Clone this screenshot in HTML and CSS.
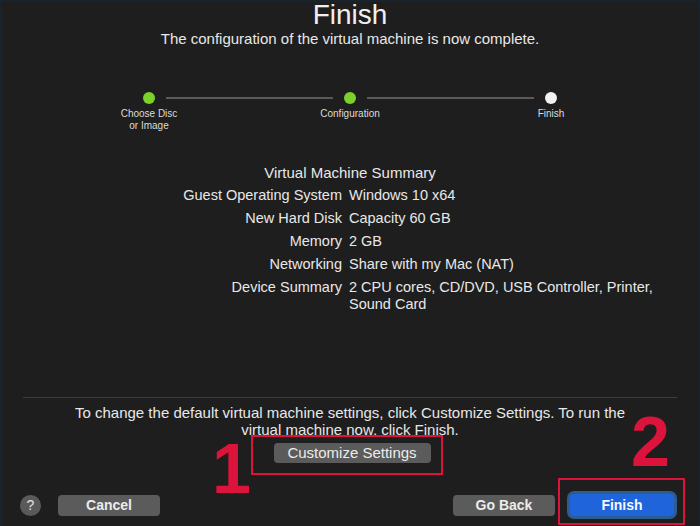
FILE: index.html
```html
<!DOCTYPE html>
<html lang="en">
<head>
  <meta charset="UTF-8">
  <title>Finish</title>
  <link rel="stylesheet" href="styles.css">
</head>
<body>
  <div class="window">
    <h1 class="title">Finish</h1>
    <p class="subtitle">The configuration of the virtual machine is now complete.</p>

    <!-- Wizard steps -->
    <div class="steps">
      <div class="step">
        <span class="dot done"></span>
        <span class="step-label">Choose Disc<br>or Image</span>
      </div>
      <span class="link"></span>
      <div class="step">
        <span class="dot done"></span>
        <span class="step-label">Configuration</span>
      </div>
      <span class="link"></span>
      <div class="step">
        <span class="dot"></span>
        <span class="step-label">Finish</span>
      </div>
    </div>

    <!-- Summary -->
    <h2 class="summary-title">Virtual Machine Summary</h2>
    <dl class="summary">
      <dt>Guest Operating System</dt><dd>Windows 10 x64</dd>
      <dt>New Hard Disk</dt><dd>Capacity 60 GB</dd>
      <dt>Memory</dt><dd>2 GB</dd>
      <dt>Networking</dt><dd>Share with my Mac (NAT)</dd>
      <dt>Device Summary</dt><dd>2 CPU cores, CD/DVD, USB Controller, Printer, Sound Card</dd>
    </dl>

    <div class="footer">
      <div class="rule"></div>
      <p class="note">To change the default virtual machine settings, click Customize Settings. To run the virtual machine now, click Finish.</p>
      <div class="customize-row">
        <button class="btn btn-customize">Customize Settings</button>
      </div>
      <div class="actions">
        <span class="help">?</span>
        <button class="btn btn-cancel">Cancel</button>
        <button class="btn btn-back">Go Back</button>
        <button class="btn btn-primary">Finish</button>
      </div>

      <!-- Annotation marks -->
      <span class="mark mark-one">1</span>
      <span class="mark mark-two">2</span>
      <span class="mark-box box-one"></span>
      <span class="mark-box box-two"></span>
    </div>
  </div>
</body>
</html>
```

FILE: styles.css
```css
body {
  margin: 0;
  background: #1e1e1e;
  font-family: "Liberation Sans", Arial, sans-serif;
  color: #e8e8e8;
}
.window {
  width: 700px;
  height: 526px;
  box-sizing: border-box;
  border: 2px solid #18232b;
  border-bottom: 0;
  display: flex;
  flex-direction: column;
  overflow: hidden;
}
.title {
  margin: 0;
  font-size: 28px;
  font-weight: normal;
  line-height: 26px;
  text-align: center;
  color: #f0f0f0;
}
.subtitle {
  margin: 2px 0 0;
  font-size: 15px;
  line-height: 18px;
  text-align: center;
}
.steps {
  display: flex;
  width: 414px;
  margin: 44px auto 0;
}
.step {
  width: 12px;
  display: flex;
  flex-direction: column;
  align-items: center;
}
.dot {
  width: 12px;
  height: 12px;
  border-radius: 50%;
  background: #f2f2f2;
}
.dot.done {
  background: #7cd02a;
}
.link {
  flex: 1;
  height: 2px;
  margin: 5px 11px 0;
  background: #5a5a5a;
}
.step-label {
  margin-top: 4px;
  font-size: 10px;
  line-height: 12px;
  white-space: nowrap;
  text-align: center;
  color: #dcdcdc;
}
.summary-title {
  margin: 32px 0 0;
  font-size: 15px;
  font-weight: normal;
  line-height: 18px;
  text-align: center;
}
.summary {
  display: grid;
  grid-template-columns: 340px 1fr;
  column-gap: 7px;
  row-gap: 6px;
  margin: 5px 38px 0 0;
  font-size: 14.5px;
  line-height: 17px;
}
.summary dt {
  text-align: right;
}
.summary dd {
  margin: 0;
}
.footer {
  position: relative;
  margin-top: 84px;
  flex: 1;
}
.rule {
  height: 1px;
  margin: 0 21px;
  background: #3d3d3d;
}
.note {
  margin: 6px 0 0;
  padding: 0 70px;
  font-size: 15px;
  line-height: 17px;
  text-align: center;
}
.customize-row {
  display: flex;
  justify-content: center;
  margin-top: 5px;
  padding-left: 4px;
}
.btn {
  height: 21px;
  border: 0;
  border-radius: 4px;
  background: #5b5b5b;
  color: #ececec;
  font-family: inherit;
  font-size: 14px;
  line-height: 21px;
  padding: 0;
}
.btn-customize {
  width: 157px;
  height: 20px;
  font-size: 15px;
  line-height: 20px;
}
.actions {
  display: flex;
  align-items: center;
  height: 28px;
  margin-top: 28px;
  padding: 0 24px 0 18px;
}
.help {
  width: 21px;
  height: 21px;
  border-radius: 50%;
  background: #5a5a5a;
  color: #e4e4e4;
  font-size: 14px;
  line-height: 21px;
  text-align: center;
}
.btn-cancel {
  width: 102px;
  margin-left: 17px;
  font-weight: bold;
}
.btn-back {
  width: 102px;
  margin-left: auto;
  font-weight: bold;
}
.btn-primary {
  width: 104px;
  height: 22px;
  margin-left: 15px;
  background: #1f64db;
  box-shadow: 0 0 0 3px #2b5d8f;
  font-weight: bold;
  color: #f4f8ff;
}
.mark {
  position: absolute;
  font-size: 70px;
  font-weight: bold;
  line-height: 50px;
  color: #dc143c;
}
.mark-one {
  left: 210px;
  top: 47px;
  letter-spacing: -10px;
}
.mark-two {
  left: 629px;
  top: 20px;
}
.mark-box {
  position: absolute;
  border: 2px solid #dc143c;
  box-sizing: border-box;
}
.box-one {
  left: 249px;
  top: 38px;
  width: 192px;
  height: 40px;
}
.box-two {
  left: 556px;
  top: 81px;
  width: 127px;
  height: 47px;
}
```
